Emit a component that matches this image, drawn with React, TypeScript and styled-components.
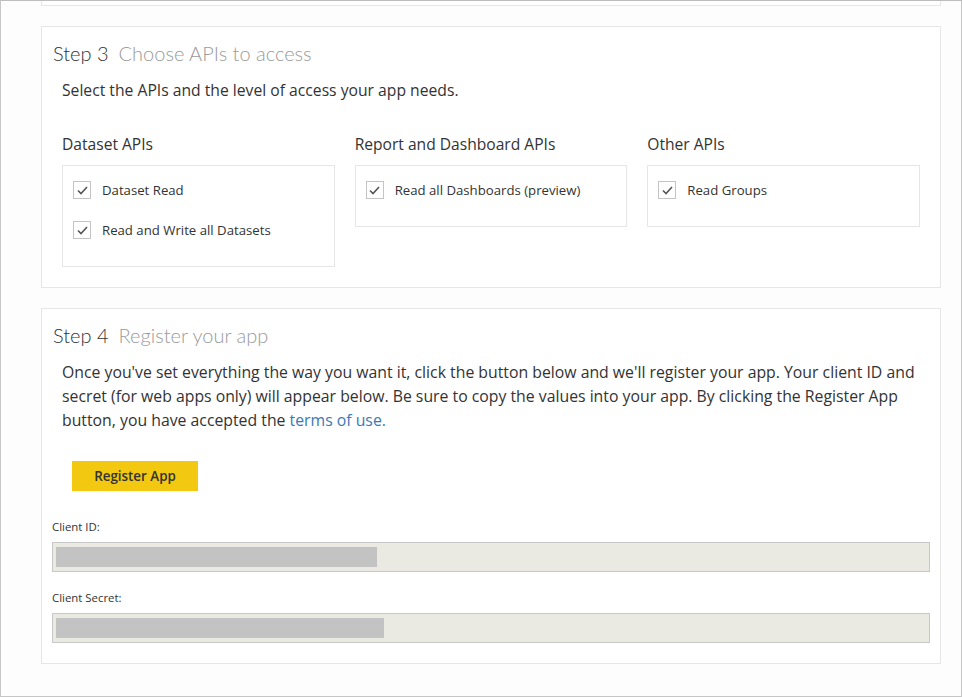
import React from "react";
import styled, { createGlobalStyle } from "styled-components";

const Global = createGlobalStyle`
  html, body { margin: 0; padding: 0; background: #fdfdfd; }
  * { box-sizing: border-box; }
  body { font-family: "Open Sans", "Noto Sans", "Liberation Sans", sans-serif; color: #333; }
`;

const Frame = styled.div`
  height: 697px;
  border: 1px solid #c6c6c6;
  border-top-color: #bdbdbd;
  padding: 0 20px 0 40px;
  display: flex;
  flex-direction: column;
  gap: 20px;
  background: #fdfdfd;
  overflow: hidden;
`;

const PrevCard = styled.div`
  height: 5px;
  background: #fff;
  border: 1px solid #e6e6e6;
  border-top: none;
`;

const Card = styled.section`
  background: #fff;
  border: 1px solid #e6e6e6;
  padding: 12px 10px 20px 10px;
  display: flex;
  flex-direction: column;
`;

const Heading = styled.h2`
  margin: 0 0 0 1px;
  font-family: "Lato", "Open Sans", sans-serif;
  font-size: 20px;
  line-height: 28px;
  font-weight: 300;
  color: #333;
  white-space: nowrap;
`;

const HeadingSub = styled.span`
  color: #9a9a9a;
  margin-left: 10px;
`;

const Description = styled.p`
  margin: 13px 0 0 10px;
  font-size: 15.7px;
  line-height: 20px;
  color: #333;
  white-space: nowrap;
`;

const Columns = styled.div`
  margin: 33px 10px 0 10px;
  display: grid;
  grid-template-columns: repeat(3, 1fr);
  column-gap: 20px;
  align-items: start;
`;

const Column = styled.div`
  display: flex;
  flex-direction: column;
`;

const ColumnTitle = styled.h3`
  margin: 0;
  font-size: 15.6px;
  line-height: 22px;
  font-weight: 400;
  color: #333;
  white-space: nowrap;
`;

const OptionBox = styled.div`
  margin-top: 10px;
  border: 1px solid #e6e6e6;
  padding: 12px 10px 24px 10px;
  display: flex;
  flex-direction: column;
  gap: 16px;
`;

const Option = styled.label`
  display: flex;
  align-items: center;
  height: 24px;
  font-size: 13.2px;
  color: #333;
  white-space: nowrap;
`;

const Box = styled.span`
  width: 18px;
  height: 18px;
  border: 1px solid #c4c4c4;
  background: #fff;
  display: inline-flex;
  align-items: center;
  justify-content: center;
  margin-right: 11px;
  flex: none;
`;

const Paragraph = styled.p`
  margin: 11px 0 0 10px;
  font-size: 15.8px;
  line-height: 24px;
  color: #333;
  white-space: nowrap;
`;

const Link = styled.a`
  color: #3b79b4;
  text-decoration: none;
`;

const RegisterButton = styled.button`
  margin: 29px 0 0 20px;
  align-self: flex-start;
  width: 126px;
  height: 30px;
  border: none;
  background: #f2c811;
  color: #333;
  font-family: inherit;
  font-size: 13.4px;
  font-weight: 600;
  cursor: pointer;
`;

const FieldLabel = styled.div<{ $first?: boolean }>`
  margin-top: ${(p) => (p.$first ? "28px" : "18px")};
  font-size: 11.4px;
  line-height: 16px;
  color: #333;
`;

const Field = styled.div`
  margin-top: 7px;
  height: 30px;
  border: 1px solid #c8c8c8;
  background: #eae9e2;
  padding: 4px 3px;
`;

const Masked = styled.div`
  height: 20px;
  background: #c3c3c3;
`;

const Check = () => (
  <svg width="11" height="9" viewBox="0 0 11 9" aria-hidden="true">
    <polyline points="1,4.5 4,7.5 10,1" fill="none" stroke="#555" strokeWidth="1.6" />
  </svg>
);

const Checkbox: React.FC<{ label: string }> = ({ label }) => (
  <Option>
    <Box>
      <Check />
    </Box>
    {label}
  </Option>
);

const columns = [
  { title: "Dataset APIs", items: ["Dataset Read", "Read and Write all Datasets"] },
  { title: "Report and Dashboard APIs", items: ["Read all Dashboards (preview)"] },
  { title: "Other APIs", items: ["Read Groups"] },
];

export default function App() {
  return (
    <>
      <Global />
      <Frame>
        <PrevCard />
        <Card>
          <Heading>
            Step 3<HeadingSub>Choose APIs to access</HeadingSub>
          </Heading>
          <Description>Select the APIs and the level of access your app needs.</Description>
          <Columns>
            {columns.map((c) => (
              <Column key={c.title}>
                <ColumnTitle>{c.title}</ColumnTitle>
                <OptionBox>
                  {c.items.map((i) => (
                    <Checkbox key={i} label={i} />
                  ))}
                </OptionBox>
              </Column>
            ))}
          </Columns>
        </Card>
        <Card>
          <Heading>
            Step 4<HeadingSub>Register your app</HeadingSub>
          </Heading>
          <Paragraph>
            Once you've set everything the way you want it, click the button below and we'll register your app. Your client ID and
            <br />
            secret (for web apps only) will appear below. Be sure to copy the values into your app. By clicking the Register App
            <br />
            button, you have accepted the <Link href="#">terms of use.</Link>
          </Paragraph>
          <RegisterButton type="button">Register App</RegisterButton>
          <FieldLabel $first>Client ID:</FieldLabel>
          <Field>
            <Masked style={{ width: 321 }} />
          </Field>
          <FieldLabel>Client Secret:</FieldLabel>
          <Field>
            <Masked style={{ width: 328 }} />
          </Field>
        </Card>
      </Frame>
    </>
  );
}
